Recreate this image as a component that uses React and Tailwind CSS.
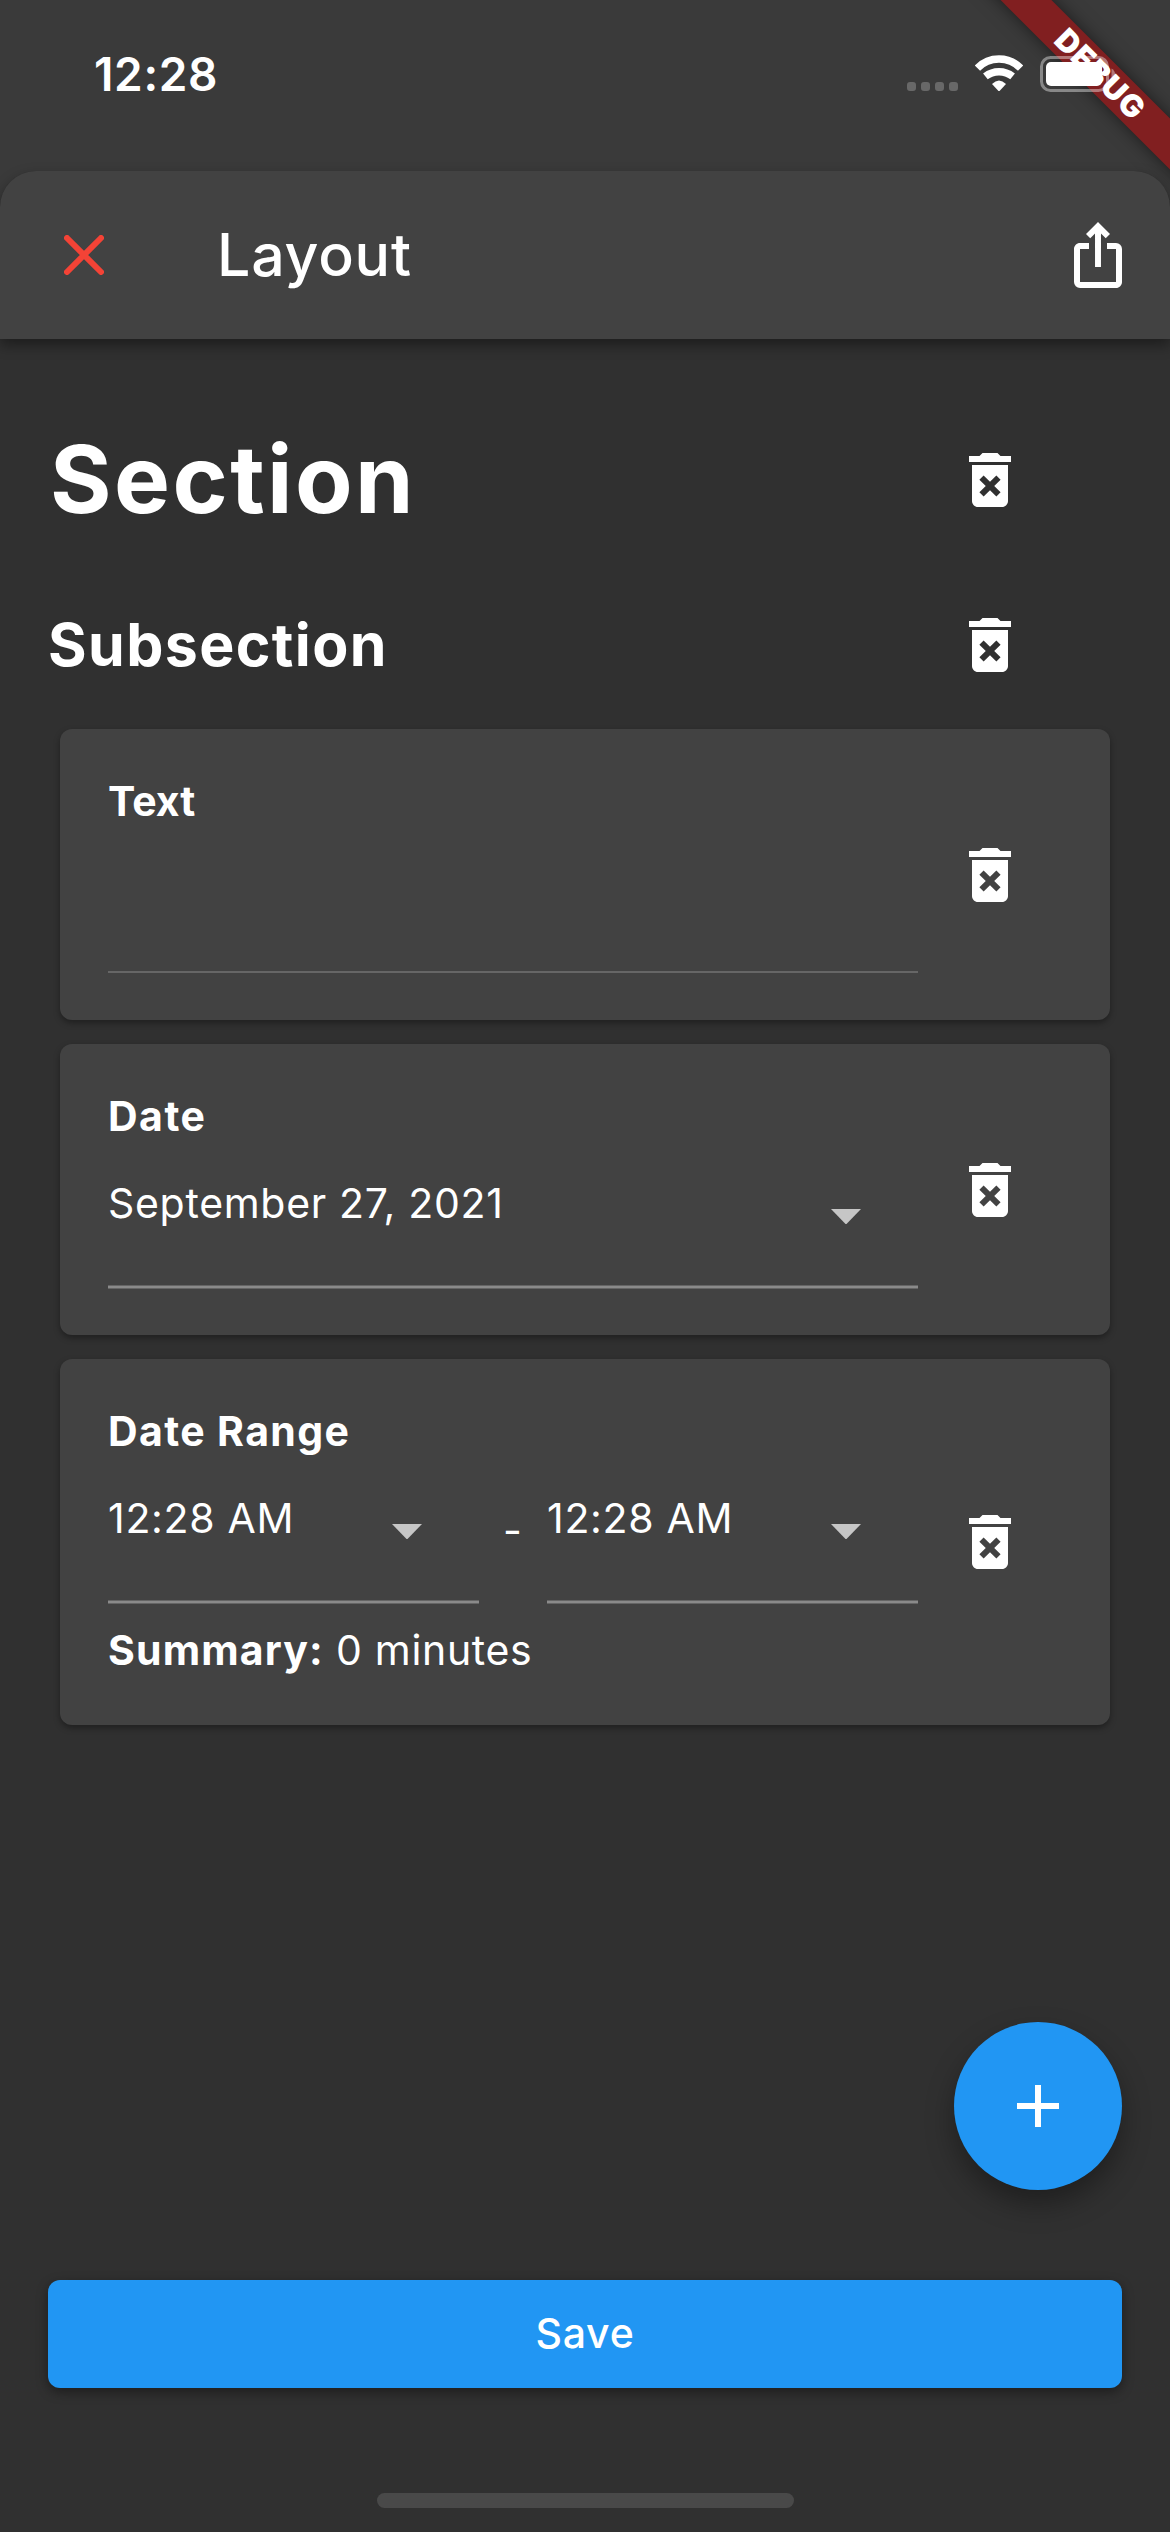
import { MdDeleteForever, MdIosShare } from 'react-icons/md';

function DebugBanner() {
  return (
    <div className="absolute top-0 right-0 h-[339px] w-[340px] overflow-hidden">
      <div className="absolute top-[54.5px] left-[119px] flex h-9 w-[300px] rotate-45 items-center justify-center bg-[#811f20] pl-[4px] shadow-[0_0_18px_rgba(0,0,0,0.5)]">
        <span className="text-[31px] leading-9 font-black tracking-[1.2px] text-white">DEBUG</span>
      </div>
    </div>
  );
}

function StatusBar() {
  return (
    <div className="relative flex h-[171px] justify-between pl-[94px] pr-[54px]">
      <DebugBanner />
      <span className="h-[148px] text-[46px] leading-[148px] font-semibold tracking-[0.65px]">12:28</span>
      <div className="relative flex h-[92px] items-end">
        <div className="mb-[1px] flex gap-[5px]">
          {[0, 1, 2, 3].map((i) => (
            <span key={i} className="h-[9px] w-[9px] rounded-[3px] bg-[#686868]" />
          ))}
        </div>
        <svg className="mb-[1px] ml-[17px] h-9 w-12" viewBox="0 0 48 36" fill="none">
          <path d="M2.4 13.2A30.2 30.2 0 0 1 45.6 13.2" stroke="#fff" strokeWidth="7.5" />
          <path d="M10.4 21.4A22 22 0 0 1 37.6 21.4" stroke="#fff" strokeWidth="7.5" />
          <path d="M17 29Q24 22 31 29L25 35.4Q24 36.4 23 35.4Z" fill="#fff" />
        </svg>
        <svg className="ml-[17px] h-9 w-[76px]" viewBox="0 0 76 36" fill="none">
          <rect x="1.5" y="1.5" width="66" height="33" rx="9" stroke="#fff" strokeOpacity="0.4" strokeWidth="3" />
          <rect x="6" y="6" width="56" height="24" rx="5" fill="#fff" />
          <path d="M71.5 12.5Q75 14.5 75 18T71.5 23.5Z" fill="#fff" fillOpacity="0.4" />
        </svg>
      </div>
    </div>
  );
}

function AppBar() {
  return (
    <header className="relative flex h-[168px] items-center rounded-t-[36px] bg-[#424242] pl-16 pr-9 shadow-[0_6px_14px_rgba(0,0,0,0.4)]">
      <svg className="h-10 w-10" viewBox="0 0 40 40" fill="none">
        <path d="M3 3L37 37M37 3L3 37" stroke="#f44336" strokeWidth="6" strokeLinecap="round" />
      </svg>
      <h1 className="ml-[113px] flex-1 text-[59px] leading-[72px] font-medium tracking-[0.8px]">Layout</h1>
      <MdIosShare className="h-[72px] w-[72px]" />
    </header>
  );
}

function DeleteButton() {
  return (
    <button className="ml-9 shrink-0">
      <MdDeleteForever className="h-[72px] w-[72px]" />
    </button>
  );
}

function Card({ title, className = '', children }) {
  return (
    <section
      className={`mx-3 flex items-center rounded-xl bg-[#424242] pt-12 pl-12 shadow-[0_3px_6px_rgba(0,0,0,0.35)] ${className}`}
    >
      <div className="w-[810px] self-start">
        {title}
        {children}
      </div>
      <DeleteButton />
    </section>
  );
}

function Dropdown({ value, className }) {
  return (
    <div className={className}>
      <div className="flex h-[145px] justify-between pr-[57px]">
        <span className="pt-[39px] text-[41px] leading-[48px] tracking-[0.7px]">{value}</span>
        <svg className="mt-[68.5px] h-[15.5px] w-[30px]" viewBox="0 0 30 15.5">
          <path d="M0 0H30L15 15.5Z" fill="#c6c6c6" />
        </svg>
      </div>
      <div className="h-1 border-y border-[#656565] bg-[#8a8a8a]" />
    </div>
  );
}

export default function App() {
  return (
    <div className="relative flex h-[2532px] w-[1170px] flex-col overflow-hidden bg-[#3a3a3a] font-[Inter,sans-serif] text-white">
      <StatusBar />
      <div className="flex flex-1 flex-col rounded-t-[36px] bg-[#303030]">
        <AppBar />
        <main className="flex-1 px-12 pt-12">
          <div className="flex h-[186px] items-center">
            <h2 className="w-[870px] pb-[2px] pl-[2px] text-[94px] leading-[112px] font-bold tracking-[2.45px]">Section</h2>
            <DeleteButton />
          </div>
          <div className="mb-3 flex h-36 items-center">
            <h3 className="w-[870px] text-[59px] leading-[72px] font-bold tracking-[1.4px]">Subsection</h3>
            <DeleteButton />
          </div>
          <div className="flex flex-col gap-6">
            <Card
              className="h-[291px] pb-[47px]"
              title={<h4 className="text-[41px] leading-[48px] font-bold">Text</h4>}
            >
              <div className="h-[148px] border-b-2 border-[#666666]" />
            </Card>
            <Card
              className="h-[291px] pb-[47px]"
              title={<h4 className="text-[41px] leading-[48px] font-bold tracking-[1.5px]">Date</h4>}
            >
              <Dropdown value="September 27, 2021" />
            </Card>
            <Card
              className="h-[366px] pb-[48px]"
              title={<h4 className="text-[41px] leading-[48px] font-bold tracking-[1.38px]">Date Range</h4>}
            >
              <div className="flex">
                <Dropdown value="12:28 AM" className="w-[371px]" />
                <span className="w-[68px] pt-[51px] pl-6 text-[41px] leading-[48px]">-</span>
                <Dropdown value="12:28 AM" className="w-[371px]" />
              </div>
              <p className="mt-[22px] text-[41px] leading-[48px] tracking-[0.68px]">
                <b className="tracking-[1.14px]">Summary:</b> 0 minutes
              </p>
            </Card>
          </div>
        </main>
        <footer className="px-12 pb-6">
          <button className="flex h-[108px] w-full items-center justify-center rounded-xl bg-[#2196f3] pb-[2px] text-[41px] leading-[48px] font-medium tracking-[0.8px] shadow-[0_4px_12px_rgba(0,0,0,0.4)]">
            Save
          </button>
          <div className="mx-auto mt-[105px] h-[15px] w-[417px] rounded-full bg-[#494949]" />
        </footer>
      </div>
      <button className="absolute right-12 bottom-[342px] flex h-[168px] w-[168px] items-center justify-center rounded-full bg-[#2196f3] shadow-[0_14px_28px_rgba(0,0,0,0.35)]">
        <svg className="h-[42px] w-[42px]" viewBox="0 0 42 42">
          <path d="M21 0V42M0 21H42" stroke="#fff" strokeWidth="6" />
        </svg>
      </button>
    </div>
  );
}
